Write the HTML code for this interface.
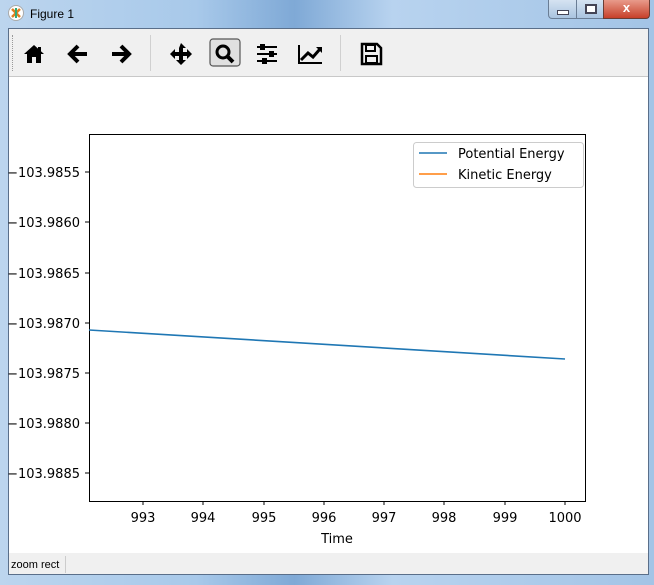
<!DOCTYPE html>
<html><head><style>
body{margin:0;width:654px;height:585px;overflow:hidden;font-family:"Liberation Sans","DejaVu Sans",sans-serif;background:#a9c8e6}
.frame{position:absolute;left:0;top:0;width:654px;height:585px;background:linear-gradient(90deg,#bcd5ee 0%,#a8c9ea 30%,#7fa9d6 45%,#b8d3ef 60%,#a3c4e6 100%)}
.title{position:absolute;left:30px;top:7px;font-size:12px;color:#000}
.client{position:absolute;left:8px;top:28px;width:641px;height:547px;background:#f0f0f0;border:1px solid #5a6f8a;box-sizing:border-box}
.canvas{position:absolute;left:9px;top:77px;width:639px;height:476px;background:#fff}
.status{position:absolute;left:9px;top:555px;font-size:11px}
.sep{position:absolute;width:1px;height:36px;top:35px;background:#d0d0d0}
</style></head><body>
<div class="frame"></div>
<svg style="position:absolute;left:8px;top:5px" width="16" height="16"><circle cx="8" cy="8" r="7.5" fill="#fff" stroke="#aaa"/><path d="M4 4L12 12M12 4L4 12" stroke="#e08020" stroke-width="2.5"/><path d="M8 3v10" stroke="#3a7" stroke-width="2"/></svg>
<div class="title">Figure 1</div>
<div style="position:absolute;left:548px;top:0;width:27px;height:18px;background:linear-gradient(#d5e3f2,#aac4e0);border:1px solid #6a7d95;border-top:none;border-radius:0 0 0 4px"><div style="position:absolute;left:8px;top:10px;width:10px;height:3px;background:#fff;border:1px solid #445"></div></div>
<div style="position:absolute;left:576px;top:0;width:26px;height:18px;background:linear-gradient(#d5e3f2,#aac4e0);border:1px solid #6a7d95;border-top:none"><div style="position:absolute;left:8px;top:4px;width:8px;height:6px;border:2px solid #445;background:#fff"></div></div>
<div style="position:absolute;left:603px;top:0;width:45px;height:18px;background:linear-gradient(#e89b8b,#c7402a);border:1px solid #6a3d35;border-top:none;border-radius:0 0 4px 0;color:#fff;font-weight:bold;font-size:13px;text-align:center;line-height:16px">x</div>
<div class="client"></div>
<div style="position:absolute;left:12px;top:35px;width:2px;height:36px;border-left:1px dotted #999"></div>
<svg style="position:absolute;left:22px;top:38px" width="380" height="32" fill="#000">
<g transform="translate(0,4)">
<path d="M2 12L12 3L22 12H19V21H14V15H10V21H5V12Z"/><path d="M16 5h3v5l-3-3z"/>
<path d="M56 4L48 12L56 20M48 12H65" fill="none" stroke="#000" stroke-width="4" stroke-linejoin="miter"/>
<path d="M90 12H107M99 4L107 12L99 20" fill="none" stroke="#000" stroke-width="4"/>
<path d="M159 1L164 6H161V10H165V7L170 12L165 17V14H161V18H164L159 23L154 18H157V14H153V17L148 12L153 7V10H157V6Z"/>
<rect x="188" y="-3" width="30" height="27" rx="3" fill="#e0e0e0" stroke="#555" stroke-width="1.2"/>
<circle cx="201" cy="10" r="6" fill="none" stroke="#000" stroke-width="3"/><path d="M205 14L211 20" stroke="#000" stroke-width="4"/>
<path d="M235 5H255M235 12H255M235 19H255" stroke="#000" stroke-width="2"/><rect x="238" y="2" width="5" height="6"/><rect x="247" y="9" width="5" height="6"/><rect x="240" y="16" width="5" height="6"/>
<path d="M277 3V21H300" fill="none" stroke="#000" stroke-width="2"/><path d="M279 18L286 11L291 15L298 7" fill="none" stroke="#000" stroke-width="3"/><path d="M294 5H300V11Z"/>
<path d="M340 2H355L359 6V22H340Z" fill="none" stroke="#000" stroke-width="2.5"/><rect x="344" y="3" width="9" height="6" fill="none" stroke="#000" stroke-width="2"/><rect x="344" y="14" width="11" height="7" fill="none" stroke="#000" stroke-width="2"/>
</g></svg>
<div class="sep" style="left:150px"></div><div class="sep" style="left:340px"></div>
<div style="position:absolute;left:9px;top:76px;width:639px;height:1px;background:#c8c8c8"></div>
<div class="canvas"></div>
<div style="position:absolute;left:9px;top:553px;width:639px;height:21px;background:#f0f0f0"></div>
<div class="status" style="top:559px;left:11px">zoom rect</div>
<div style="position:absolute;left:65px;top:556px;width:1px;height:17px;background:#ccc"></div>
<svg style="position:absolute;left:0;top:0" width="654" height="585" font-size="13" font-family="DejaVu Sans,sans-serif">
<rect x="89.5" y="134.5" width="496" height="367" fill="none" stroke="#000"/>
<polyline points="89,330 565,359" stroke="#1f77b4" stroke-width="1.6" fill="none"/>
<g stroke="#000">
<path d="M143 501v4M203 501v4M264 501v4M324 501v4M384 501v4M444 501v4M505 501v4M565 501v4"/>
<path d="M89 172h-4M89 222h-4M89 273h-4M89 323h-4M89 373h-4M89 423h-4M89 473h-4"/>
</g>
<g text-anchor="middle"><text x="143" y="522">993</text><text x="203" y="522">994</text><text x="264" y="522">995</text><text x="324" y="522">996</text><text x="384" y="522">997</text><text x="444" y="522">998</text><text x="505" y="522">999</text><text x="565" y="522">1000</text><text x="337" y="543">Time</text></g>
<g text-anchor="end"><text x="80" y="177">−103.9855</text><text x="80" y="227">−103.9860</text><text x="80" y="278">−103.9865</text><text x="80" y="328">−103.9870</text><text x="80" y="378">−103.9875</text><text x="80" y="428">−103.9880</text><text x="80" y="478">−103.9885</text></g>
<rect x="413.5" y="142.5" width="170" height="45" rx="3" fill="#fff" stroke="#ccc"/>
<path d="M419 153h28" stroke="#1f77b4" stroke-width="1.6"/><path d="M419 174h28" stroke="#ff7f0e" stroke-width="1.6"/>
<text x="458" y="158">Potential Energy</text><text x="458" y="179">Kinetic Energy</text>
</svg>
</body></html>
